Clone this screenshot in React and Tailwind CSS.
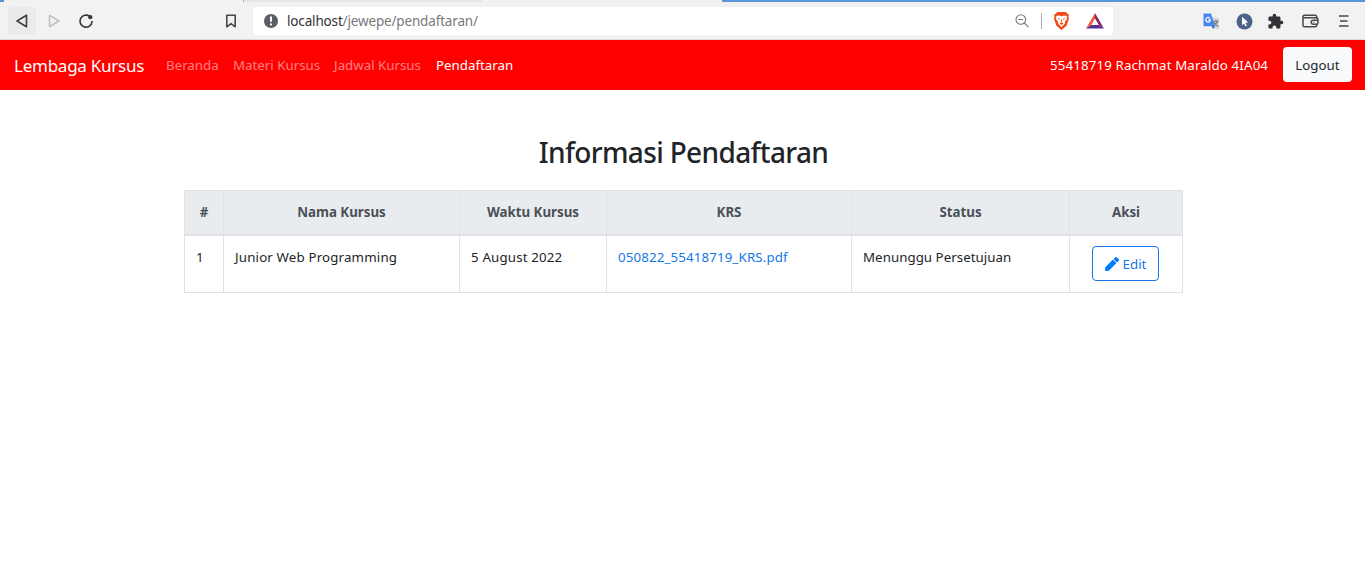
import React from "react";
import { FaPen } from "react-icons/fa";
import { MdExtension } from "react-icons/md";

function BrowserBar() {
  return (
    <div className="h-10 bg-[#f2f2f2] border-b border-[#d9dbdf] flex flex-col">
      <div className="h-[2px] flex shrink-0">
        <div className="w-1 bg-[#5f8fd0]" />
        <div className="w-[239px] bg-[#f2f2f2]" />
        <div className="w-px bg-[#a9a9a9]" />
        <div className="w-[238px] bg-[#e6e6e6]" />
        <div className="w-[240px] bg-[#f2f2f2]" />
        <div className="flex-1 bg-[#5b96d6]" />
      </div>
      <div className="flex items-center h-[37px] pt-px">
        <div className="w-7 h-7 ml-2 rounded-[3px] bg-[#ebebeb] flex items-center justify-center">
          <svg width="16" height="16" viewBox="0 0 16 16" fill="none" stroke="#3b3e43" strokeWidth="1.6" strokeLinejoin="round"><path d="M12.5 2.2V13.8L3 8Z" /></svg>
        </div>
        <svg className="ml-[10px]" width="16" height="16" viewBox="0 0 16 16" fill="none" stroke="#bfbfbf" strokeWidth="1.5" strokeLinejoin="round"><path d="M3.5 2.3V13.7L13 8Z" /></svg>
        <svg className="ml-4" width="16" height="16" viewBox="0 0 16 16" fill="none" stroke="#34373b" strokeWidth="1.6" strokeLinecap="round"><path d="M11.7 3.4A6 6 0 1 0 14 8.6" /><circle cx="12.3" cy="4.2" r="2.1" fill="#34373b" stroke="none" /></svg>
        <svg className="ml-[129px]" width="16" height="16" viewBox="0 0 16 16" fill="none" stroke="#46494e" strokeWidth="1.6" strokeLinejoin="round"><path d="M3.8 2.2H12.2V13.8L8 10.6L3.8 13.8Z" /></svg>
        <div className="ml-[14px] w-[860px] h-7 bg-white rounded-[3px] flex items-center">
          <svg className="ml-[10px]" width="16" height="16" viewBox="0 0 16 16"><circle cx="8" cy="8" r="7" fill="#5b5f65" /><path d="M8 3.6V8.8" stroke="#fff" strokeWidth="2" /><circle cx="8" cy="11.4" r="1.1" fill="#fff" /></svg>
          <div className="ml-2 text-[13.5px] leading-5 text-[#77797d] whitespace-nowrap tracking-[-0.16px]"><span className="text-[#2f3237]">localhost</span>/jewepe/pendaftaran/</div>
          <svg className="ml-auto" width="16" height="16" viewBox="0 0 16 16" fill="none" stroke="#77797d" strokeWidth="1.1"><circle cx="6.8" cy="6.5" r="4.8" /><path d="M4.5 6.5H9.1M10.3 10L14.5 14.2" /></svg>
          <div className="w-px h-4 bg-[#a9abad] ml-[11px]" />
          <svg className="ml-[11px]" width="17" height="20" viewBox="0 0 17 20"><path d="M4.2 1H12.8L14.6 3L16 3.4L15.4 6L16 8L13.5 14.8L8.5 19L3.5 14.8L1 8L1.6 6L1 3.4L2.4 3Z" fill="#ef4b16" /><path d="M3.3 5L6 4.6L8.5 5.3L11 4.6L13.7 5L14 8L11.8 11L12 12.5L8.5 16L5 12.5L5.2 11L3 8Z" fill="#fff" /><path d="M4.6 7.1L7.2 8L6.3 8.9ZM12.4 7.1L9.8 8L10.7 8.9ZM8.5 7.5L9.2 10.6L8.5 11.2L7.8 10.6ZM6.3 12.2L8.5 11.5L10.7 12.2L8.5 14Z" fill="#ef4b16" /></svg>
          <svg className="ml-4 mr-[9px]" width="18" height="16" viewBox="0 0 18 16"><path d="M9 0L0 15.5L5.3 12L9 5.2Z" fill="#f25b32" /><path d="M9 0L18 15.5L12.7 12L9 5.2Z" fill="#8d2568" /><path d="M0 15.5H18L12.7 12H5.3Z" fill="#57308f" /></svg>
        </div>
        <svg className="ml-[90px]" width="17" height="17" viewBox="0 0 17 17"><path d="M7 4.8H16V16H10.5Z" fill="#d4d6d8" /><path d="M10.2 8.3H15.6M13 7V8.5M14.5 8.5C13.8 10.8 12.2 12.2 10.8 13M11 9.5L15.2 13.7" fill="none" stroke="#74797e" strokeWidth="1.1" /><path d="M1.5 .5H8L12 13.2H1.5A1 1 0 0 1 .5 12.2V1.5A1 1 0 0 1 1.5 .5Z" fill="#4587ed" /><path d="M8.7 13H12L9.9 16.2Z" fill="#3168c7" /><path d="M6.8 5.2A2.3 2.3 0 1 0 7.4 6.9H5.2" fill="none" stroke="#fff" strokeWidth="1.2" /></svg>
        <svg className="ml-4" width="17" height="17" viewBox="0 0 17 17"><circle cx="8.5" cy="8.5" r="8" fill="#4c6288" /><path d="M6 3.8L12.3 9.6L9.4 9.8L10.9 12.7L9.4 13.4L8 10.4L6 12.2Z" fill="#fff" /></svg>
        <MdExtension className="ml-[14px]" size={17} color="#303236" />
        <svg className="ml-[18px]" width="17" height="16" viewBox="0 0 17 16" fill="none" stroke="#46494e" strokeWidth="1.5" strokeLinejoin="round"><path d="M14.5 4.5V3.3Q14.5 2.2 13.4 2.2H2.3Q1 2.2 1 3.4V12.4Q1 13.7 2.3 13.7H13.4Q14.7 13.7 14.7 12.5V11.5M1.4 4.8H14.5Q15.9 4.8 15.9 6V10.1Q15.9 11.3 14.7 11.3H11.4Q9.2 11 9.2 9.2Q9.2 7.4 11.4 7.3H15.9" /><circle cx="12" cy="9.3" r=".6" fill="#46494e" stroke="none" /></svg>
        <svg className="ml-[19px]" width="12" height="14" viewBox="0 0 12 14" stroke="#46494e" strokeWidth="1.5"><path d="M1 2H10.5M2 7H9.5M1 12H10.5" /></svg>
      </div>
    </div>
  );
}

function Navbar() {
  return (
    <nav className="h-[50px] bg-[#ff0000] flex items-center pl-[14px] pr-[13px] text-[13.3px] leading-5 whitespace-nowrap">
      <div className="pt-0.5 w-[152px] text-[17px] leading-6 tracking-[-0.25px] text-white">Lembaga Kursus</div>
      <div className="w-[67px] text-white/50">Beranda</div>
      <div className="w-[101px] text-white/50">Materi Kursus</div>
      <div className="w-[102px] text-white/50">Jadwal Kursus</div>
      <div className="text-white">Pendaftaran</div>
      <div className="ml-auto w-[219px] tracking-[0.14px] text-white">55418719 Rachmat Maraldo 4IA04</div>
      <button className="ml-[14px] mb-px w-[69px] h-[35px] rounded-[4px] bg-[#f8f9fa] text-[#212529] text-center pt-px">Logout</button>
    </nav>
  );
}

const head = "h-[46px] border-r border-t border-b-2 border-[#dee2e6] bg-[#e9ecef] text-[#495057] font-bold pb-px";
const cell = "h-[57px] border-r border-b border-[#dee2e6] align-top pt-[11px] pl-[11px]";

export default function App() {
  return (
    <div className="w-[1365px] h-[573px] bg-white overflow-hidden font-['Noto_Sans','Open_Sans',sans-serif] text-[#212529]">
      <BrowserBar />
      <Navbar />
      <main className="pt-[41px]">
        <h1 className="text-center text-[28px] leading-[42px] tracking-[-0.65px] font-medium pl-0.5">Informasi Pendaftaran</h1>
        <table className="mt-[17px] ml-[184px] w-[999px] table-fixed border-separate border-spacing-0 text-[13.3px] leading-5 whitespace-nowrap">
          <colgroup>
            <col className="w-[40px]" /><col className="w-[236px]" /><col className="w-[147px]" /><col className="w-[245px]" /><col className="w-[218px]" /><col className="w-[113px]" />
          </colgroup>
          <thead>
            <tr>
              <th className={head + " border-l"}>#</th>
              <th className={head}>Nama Kursus</th>
              <th className={head}>Waktu Kursus</th>
              <th className={head}>KRS</th>
              <th className={head}>Status</th>
              <th className={head}>Aksi</th>
            </tr>
          </thead>
          <tbody>
            <tr>
              <td className={cell + " border-l"}>1</td>
              <td className={cell + " tracking-[0.16px]"}>Junior Web Programming</td>
              <td className={cell + " tracking-[0.16px]"}>5 August 2022</td>
              <td className={cell + " tracking-[0.14px]"}><a className="text-[#1677e8]">050822_55418719_KRS.pdf</a></td>
              <td className={cell + " tracking-[0.04px]"}>Menunggu Persetujuan</td>
              <td className="h-[57px] border-r border-b border-[#dee2e6] align-top pt-[10px]">
                <button className="ml-[22px] w-[67px] h-[35px] rounded-[4px] border border-[#1677e8] text-[#1677e8] flex items-center justify-center gap-1">
                  <FaPen size={14} color="#007bff" />
                  <span>Edit</span>
                </button>
              </td>
            </tr>
          </tbody>
        </table>
      </main>
    </div>
  );
}
